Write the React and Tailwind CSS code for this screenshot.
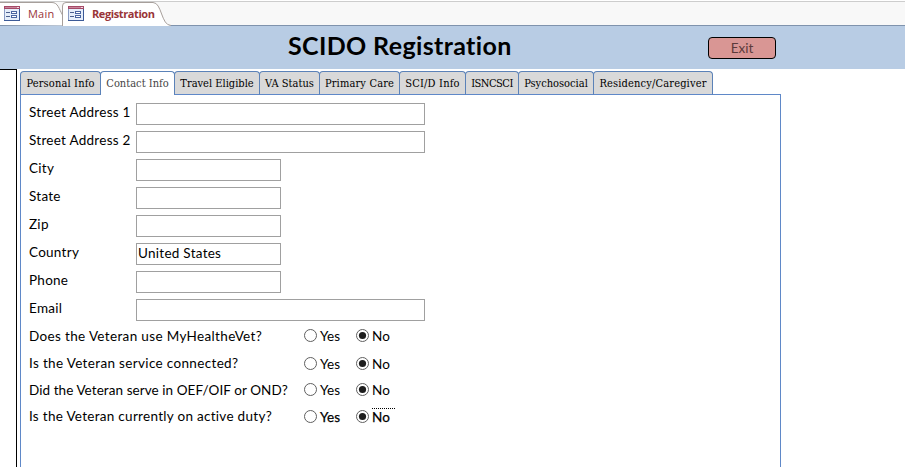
const tabs = [
  ['Personal Info', 'w-[81px]', 'tracking-[0.15px]'],
  ['Contact Info', 'w-[75px]', 'tracking-[0px]'],
  ['Travel Eligible', 'w-[86px]', 'tracking-[0px]'],
  ['VA Status', 'w-[61px]', 'tracking-[0px]'],
  ['Primary Care', 'w-[81px]', 'tracking-[0.15px]'],
  ['SCI/D Info', 'w-[67px]', 'tracking-[0.2px]'],
  ['ISNCSCI', 'w-[54px]', 'tracking-[-0.5px]'],
  ['Psychosocial', 'w-[76px]', 'tracking-[0px]'],
  ['Residency/Caregiver', 'w-[120px]', 'tracking-[0.15px]'],
];

const fields = [
  ['Street Address 1', 'w-[289px]', ''],
  ['Street Address 2', 'w-[289px]', ''],
  ['City', 'w-[145px]', ''],
  ['State', 'w-[145px]', ''],
  ['Zip', 'w-[145px]', ''],
  ['Country', 'w-[145px]', 'United States'],
  ['Phone', 'w-[145px]', ''],
  ['Email', 'w-[289px]', ''],
];

const questions = [
  ['Does the Veteran use MyHealtheVet?', 'h-7', 'tracking-[0.35px]'],
  ['Is the Veteran service connected?', 'h-[27px]', 'tracking-[0.34px]'],
  ['Did the Veteran serve in OEF/OIF or OND?', 'h-[26px]', 'tracking-[0.07px]'],
  ['Is the Veteran currently on active duty?', 'h-[27px]', 'tracking-[0.29px]'],
];

function FormIcon() {
  return (
    <svg className="block shrink-0" width="16" height="15" viewBox="0 0 16 15" shapeRendering="crispEdges">
      <path d="M0 0h16v15H0z" fill="#8b9cc4" />
      <path d="M1 3h14v11H1z" fill="#e6eefa" />
      <path d="M0 0h16v3H0z" fill="#a54a68" />
      <path d="M1 1h12v1H1z" fill="#c9869c" />
      <path d="M13 1h2v1h-2z" fill="#f3dce4" />
      <path d="M2 6h4v1H2zM2 10h4v1H2z" fill="#4c5f8e" />
      <path d="M7 5h6v3H7zM7 9h6v3H7z" fill="#4a64a0" />
      <path d="M8 6h4v1H8zM8 10h4v1H8z" fill="#fff" />
      <path d="M15 3h1v12H0v-1h15z" fill="#3c5a97" />
    </svg>
  );
}

function Radio({ checked, label, bold, focus }) {
  return (
    <div className="flex items-center">
      <svg className="block" width="14" height="14" viewBox="0 0 14 14">
        <circle cx="7.5" cy="6.5" r="6" fill="#fff" stroke="#5f5f5f" strokeWidth="1" />
        {checked && <circle cx="7.5" cy="6.5" r="3.6" fill="#1d1d1d" />}
      </svg>
      <span className={`relative ml-[3px] leading-4 tracking-[0.15px] ${bold ? '[-webkit-text-stroke:0.25px_black]' : ''}`}>
        {label}
        {focus && <i className="absolute -top-px left-0 w-[23px] border-t border-dotted border-black" />}
      </span>
    </div>
  );
}

export default function App() {
  return (
    <div className="flex h-[467px] w-[905px] flex-col overflow-hidden bg-white font-['Lato','Open_Sans',sans-serif] text-[13.5px] text-black">
      <div className="relative h-[26px] shrink-0 bg-[#f8f8f8]">
        <svg className="absolute inset-0" width="905" height="26" viewBox="0 0 905 26">
          <path d="M0 0h905v1H0z" fill="#fff" />
          <path d="M0 1h905v1H0z" fill="#cdcdcd" />
          <path d="M0 25h905v1H0z" fill="#7f93ad" />
          <path d="M-1 25V2.500H52C58 2.500 59 9 62.500 15V25.500" fill="#fff" stroke="#a79f9b" />
          <path d="M62.500 26V6Q62.500 2.500 66 2.500H153C162 2.500 161 25.500 171 25.500V26z" fill="#fff" />
          <path d="M62.500 26V6Q62.500 2.500 66 2.500H153C162 2.500 161 25.500 171 25.500" fill="none" stroke="#a79f9b" />
        </svg>
        <div className="relative flex h-[27px] items-center pl-1 font-['Open_Sans',sans-serif] text-[11px] text-[#993437]">
          <FormIcon />
          <span className="ml-2 w-10 pt-px tracking-[0.2px]">Main</span>
          <FormIcon />
          <span className="ml-2 pt-px font-bold tracking-[-0.4px]">Registration</span>
        </div>
      </div>

      <div className="flex h-[43px] shrink-0 items-center bg-[#b8cce4] pl-[288px]">
        <h1 className="w-[420px] pb-[5px] text-[25px] font-bold leading-8 tracking-[0.36px]">SCIDO Registration</h1>
        <button className="h-[22px] w-[68px] rounded-[4px] border border-black bg-[#d99694] text-[13.5px] leading-5 text-[#5c3b3b]">Exit</button>
      </div>

      <div className="flex min-h-0 flex-1">
        <div className="w-[17px] shrink-0 border-r border-t border-black" />
        <div className="ml-[3px] flex w-[761px] flex-col pt-[2px]">
          <div className="flex h-6 shrink-0 font-['DejaVu_Serif_Condensed','DejaVu_Serif',serif] text-[11px]">
            {tabs.map(([name, width, tracking], i) => (
              <div
                key={name}
                className={`flex shrink-0 items-center justify-center whitespace-nowrap rounded-t-[4px] border-x border-t border-[#5b82b8] ${width} ${tracking} ${i === 0 ? '' : '-ml-px'} ${i === 1 ? 'bg-white pt-px text-[#444]' : 'border-b border-b-[#5f88c8] bg-[#d9d9d9] pt-[2px]'}`}
              >
                {name}
              </div>
            ))}
            <div className="flex-1 border-b border-[#5f88c8]" />
          </div>
          <div className="flex-1 border-x border-[#5f88c8] pl-2 pt-[8px]">
            <div className="flex flex-col gap-[6px]">
              {fields.map(([label, width, value]) => (
                <div key={label} className="flex h-[22px] tracking-[0.27px]">
                  <label className="w-[107px] whitespace-nowrap leading-[19px]">{label}</label>
                  <div className={`border border-[#a0a0a0] bg-white pl-px leading-[19px] ${width}`}>{value}</div>
                </div>
              ))}
            </div>
            <div className="pt-px">
              {questions.map(([text, height, tracking], i) => (
                <div key={text} className={`flex items-center ${height}`}>
                  <span className={`w-[274px] whitespace-nowrap ${tracking}`}>{text}</span>
                  <div className="w-[52px]"><Radio label="Yes" bold={i === 3} /></div>
                  <Radio checked label="No" bold={i === 3} focus={i === 3} />
                </div>
              ))}
            </div>
          </div>
        </div>
      </div>
    </div>
  );
}
